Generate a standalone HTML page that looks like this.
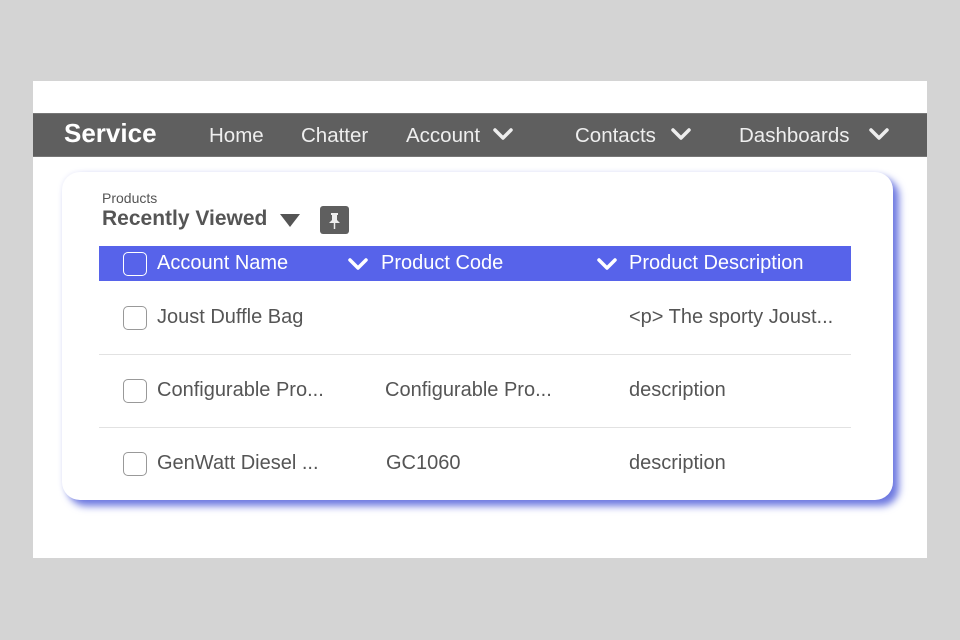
<!DOCTYPE html>
<html><head><style>
*{margin:0;padding:0;box-sizing:border-box}
body{width:960px;height:640px;background:#d4d4d4;font-family:"Liberation Sans",sans-serif;position:relative;overflow:hidden}
.panel{position:absolute;left:33px;top:81px;width:894px;height:477px;background:#fff}
.nav{position:absolute;left:33px;top:113px;width:894px;height:44px;background:#5f5f5f;border-top:1px solid #777;border-bottom:1px solid #777}
.abs{position:absolute}
.card{position:absolute;left:62px;top:172px;width:831px;height:328px;background:#fff;border-radius:18px;box-shadow:6px 6px 8px #6d78e0,0 0 6px #e8eaf8}
.hdr{position:absolute;left:99px;top:246px;width:752px;height:35px;background:#5763ea}
.t{position:absolute;font-size:20px;color:#555;white-space:nowrap}
.h{position:absolute;font-size:20px;color:#fff;white-space:nowrap;top:252px}
.cb{position:absolute;width:24px;height:24px;border:1.5px solid #999;border-radius:5px;background:#fff}
.line{position:absolute;left:99px;width:752px;height:1px;background:#e2e2e2}
.n{position:absolute;top:124px;color:#eee;font-size:20.5px}
</style></head><body>
<div class="panel"></div>
<div class="nav"></div>
<div class="abs" style="left:64px;top:118px;color:#fff;font-size:26px;font-weight:bold">Service</div>
<div class="n" style="left:209px">Home</div>
<div class="n" style="left:301px">Chatter</div>
<div class="n" style="left:406px">Account</div>
<div class="n" style="left:575px">Contacts</div>
<div class="n" style="left:739px">Dashboards</div>
<svg class="abs" style="left:0;top:0" width="960" height="640">
<g fill="none" stroke="#eee" stroke-width="3.5" stroke-linecap="round" stroke-linejoin="round">
<path d="M495 130l8 8 8-8"/><path d="M673 130l8 8 8-8"/><path d="M871 130l8 8 8-8"/>
</g>
</svg>
<div class="card"></div>
<div class="abs" style="left:102px;top:190px;font-size:14px;color:#555">Products</div>
<div class="abs" style="left:102px;top:207px;font-size:21px;font-weight:bold;color:#555">Recently Viewed</div>
<svg class="abs" style="left:279px;top:212px" width="22" height="16"><path d="M1 2h20l-10 13z" fill="#555"/></svg>
<div class="abs" style="left:320px;top:206px;width:29px;height:28px;background:#5f5f5f;border-radius:3px"></div>
<svg class="abs" style="left:320px;top:206px" width="29" height="28"><path d="M11 7h7v2l-1 0v5l3 3h-11l3-3v-5h-1z" fill="#eee"/><path d="M14.5 17v6" stroke="#eee" stroke-width="1.5"/></svg>
<div class="hdr"></div>
<div class="cb" style="left:123px;top:252px;background:none;border-color:#fff"></div>
<div class="h" style="left:157px">Account Name</div>
<div class="h" style="left:381px">Product Code</div>
<div class="h" style="left:629px">Product Description</div>
<svg class="abs" style="left:0;top:0" width="960" height="640"><g fill="none" stroke="#fff" stroke-width="3.5" stroke-linecap="round" stroke-linejoin="round">
<path d="M350 260l8 8 8-8"/><path d="M599 260l8 8 8-8"/></g></svg>
<div class="cb" style="left:123px;top:306px"></div>
<div class="t" style="left:157px;top:306px">Joust Duffle Bag</div>
<div class="t" style="left:629px;top:306px">&lt;p&gt; The sporty Joust...</div>
<div class="line" style="top:354px"></div>
<div class="cb" style="left:123px;top:379px"></div>
<div class="t" style="left:157px;top:379px">Configurable Pro...</div>
<div class="t" style="left:385px;top:379px">Configurable Pro...</div>
<div class="t" style="left:629px;top:379px">description</div>
<div class="line" style="top:427px"></div>
<div class="cb" style="left:123px;top:452px"></div>
<div class="t" style="left:157px;top:452px">GenWatt Diesel ...</div>
<div class="t" style="left:386px;top:452px">GC1060</div>
<div class="t" style="left:629px;top:452px">description</div>
</body></html>
